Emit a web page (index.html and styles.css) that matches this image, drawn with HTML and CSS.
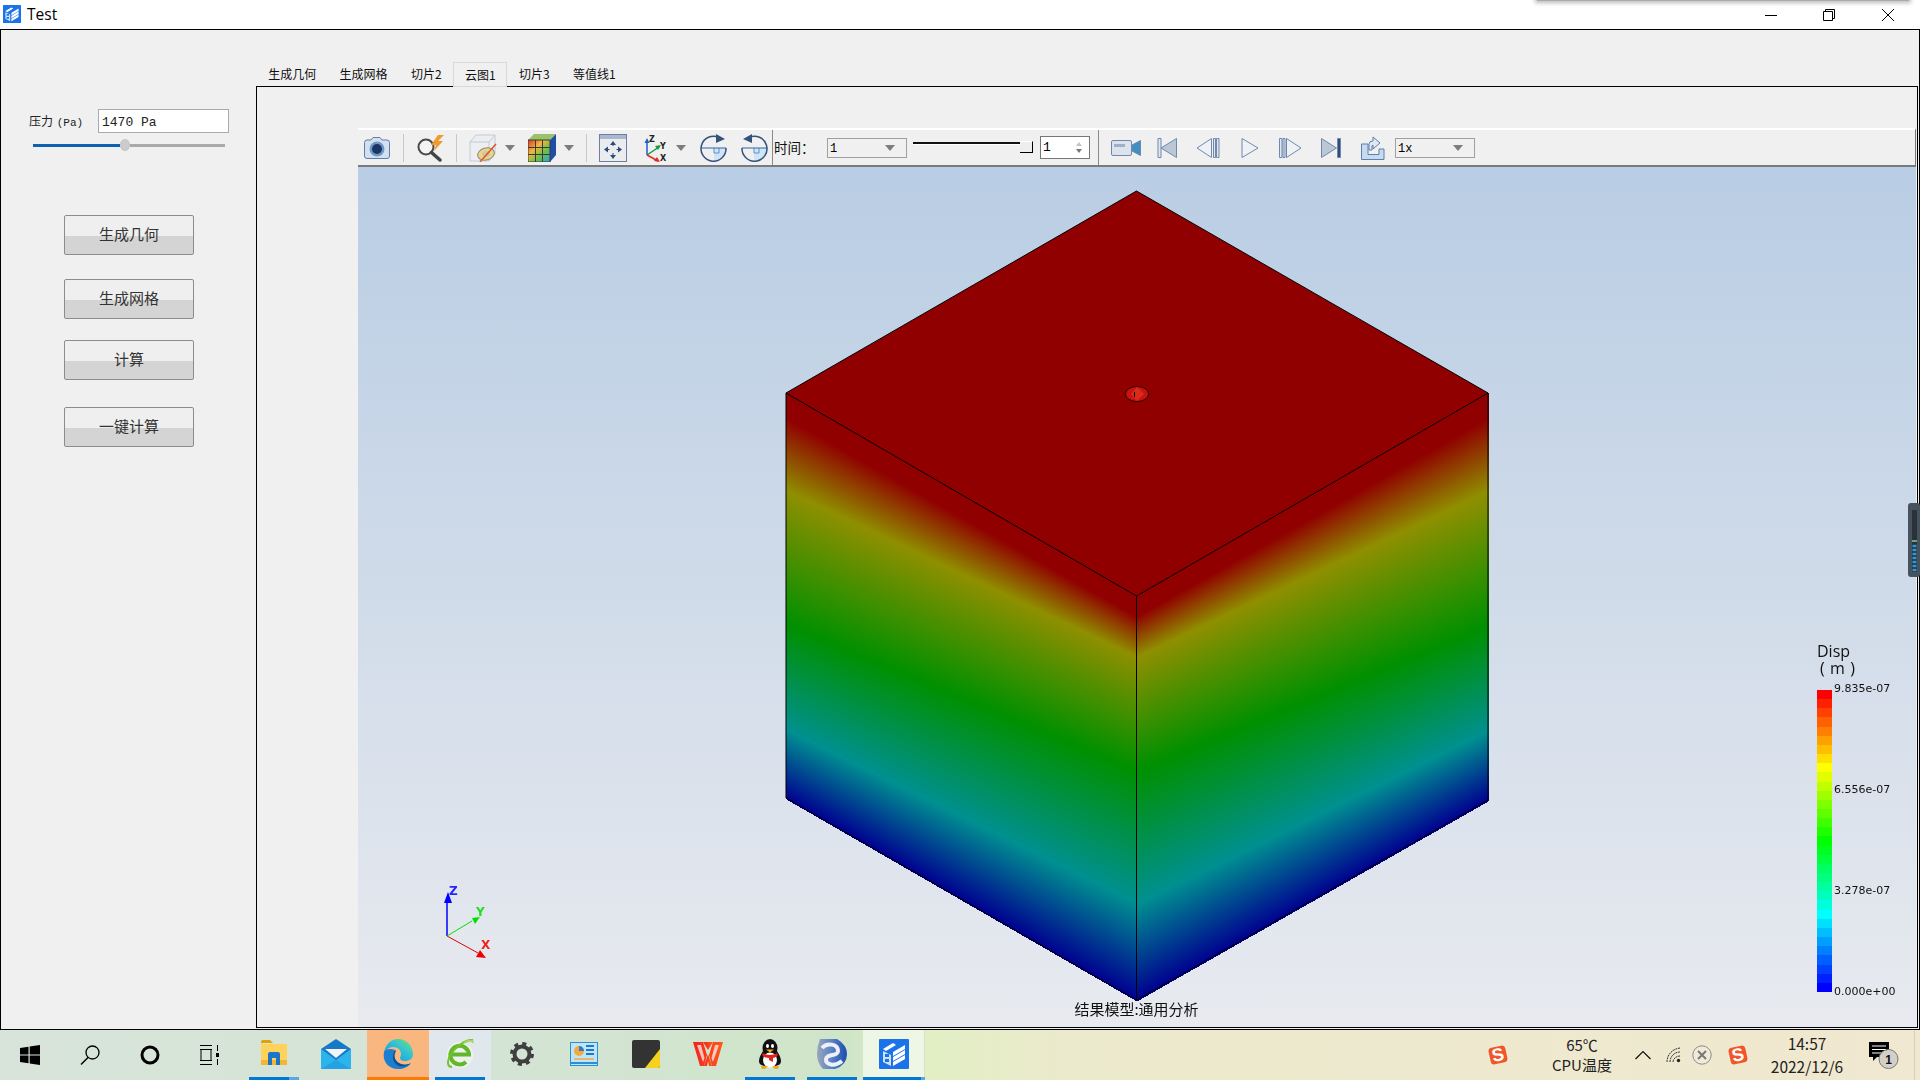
FILE: index.html
```html
<!DOCTYPE html>
<html lang="zh">
<head>
<meta charset="utf-8">
<title>Test</title>
<link rel="stylesheet" href="styles.css">
</head>
<body>
<svg class="defs" width="0" height="0">
  <defs>
    <symbol id="app" viewBox="0 0 30 30">
      <rect width="30" height="30" rx="1" fill="#1a73e8"/>
      <path d="M4 10 14 4 17 6 7 12z" fill="#fff"/>
      <path d="M4 12 12 16V27L4 23z" fill="#cfe2fb"/>
      <path d="M6 15h4v3H6zM6 20h4v3H6z" fill="#1a73e8"/>
      <path d="M14 13 26 6V10L14 17zM14 18 26 11V15L14 22zM14 23 26 16V20L14 27z" fill="#fff"/>
    </symbol>
    <symbol id="sogou" viewBox="0 0 20 20">
      <rect x="1.5" y="1.5" width="17" height="17" rx="3.5" fill="#f0562a" transform="rotate(-12 10 10)"/>
      <text class="sogou-s" x="10" y="16" text-anchor="middle" transform="rotate(-12 10 10)">S</text>
    </symbol>
  </defs>
</svg>

<header class="titlebar">
  <svg class="title-icon" width="18" height="20"><use href="#app"/></svg>
  <span class="title-text">Test</span>
  <div class="other-shadow"></div>
  <div class="win-controls">
    <svg width="14" height="14" viewBox="0 0 14 14" class="wc-min"><path d="M1 7.5h12" stroke="#000"/></svg>
    <svg width="14" height="14" viewBox="0 0 14 14" class="wc-max"><path d="M1.5 3.5h9v9h-9zM3.5 3.5v-2h9v9h-2" fill="none" stroke="#000"/></svg>
    <svg width="14" height="14" viewBox="0 0 14 14" class="wc-close"><path d="M1 1l12 12M13 1 1 13" stroke="#000"/></svg>
  </div>
</header>

<div class="window">
  <aside class="side">
    <div class="pressure">
      <label class="p-label">压力 <span class="p-unit">(Pa)</span></label>
      <div class="p-input">1470 Pa</div>
    </div>
    <div class="p-slider">
      <div class="p-fill"></div><div class="p-knob"></div><div class="p-rest"></div>
    </div>
    <button class="act act-1">生成几何</button>
    <button class="act act-2">生成网格</button>
    <button class="act act-3">计算</button>
    <button class="act act-4">一键计算</button>
  </aside>

  <main class="main">
    <nav class="tabs">
      <div class="tab">生成几何</div>
      <div class="tab">生成网格</div>
      <div class="tab">切片2</div>
      <div class="tab active">云图1</div>
      <div class="tab">切片3</div>
      <div class="tab">等值线1</div>
    </nav>
    <section class="pane">
      <div class="toolbar">
        <svg class="ml5" width="28" height="24" viewBox="0 0 28 24">
          <path d="M1.5 6.5Q1.5 4 4 4H8L10 1.5H17L19 4H24Q26.5 4 26.5 6.5V20Q26.5 22.5 24 22.5H4Q1.5 22.5 1.5 20z" fill="#d4e0ee" stroke="#5f7fa6"/>
          <circle cx="14" cy="13" r="7.5" fill="#6e98c8"/><circle cx="14" cy="13" r="5" fill="#1c3565"/>
        </svg>
        <i class="sep ml12"></i>
        <svg class="ml12" width="29" height="28" viewBox="0 0 29 28">
          <circle cx="10" cy="13" r="7.5" fill="#f4f4f4" stroke="#4a4a4a" stroke-width="2"/>
          <path d="M15.5 18.5 24 26" stroke="#444" stroke-width="3.5" stroke-linecap="round"/>
          <path d="M22 1 15 11H20L18 17 27 7H22L28 1z" fill="#ef9a2a"/>
        </svg>
        <i class="sep ml11"></i>
        <svg class="ml12" width="28" height="28" viewBox="0 0 28 28">
          <path d="M1 8 7 1H26V20L20 27H1z" fill="#eceef2" stroke="#c3c9d4"/>
          <path d="M1 8H20V27M20 8 26 1" fill="none" stroke="#c3c9d4"/>
          <ellipse cx="17" cy="20" rx="8.5" ry="6" fill="#ecd58a" stroke="#8a8a70" transform="rotate(-15 17 20)"/>
          <ellipse cx="17" cy="20" rx="4" ry="3" fill="#cfc6a4"/>
          <path d="M11 28 27 10" stroke="#d9562b" stroke-width="1.5"/>
        </svg>
        <i class="arrow ml8"></i>
        <svg class="ml13" width="28" height="28" viewBox="0 0 28 28">
          <defs><linearGradient id="cc" x1="0" y1="0" x2="1" y2="1"><stop offset="0" stop-color="#d83a2a"/><stop offset=".35" stop-color="#f4b63a"/><stop offset=".65" stop-color="#6cc04a"/><stop offset="1" stop-color="#28a0d8"/></linearGradient></defs>
          <path d="M0 6 6 0H28L22 6z" fill="#9bc16a"/><path d="M22 6 28 0V21L22 28z" fill="#1f4ea8"/>
          <rect x="0" y="6" width="22" height="22" fill="url(#cc)"/>
          <path d="M7.5 6V28M14.5 6V28M0 13.5H22M0 20.5H22M0 6H22V28H0z" stroke="#3a3a3a" fill="none"/>
        </svg>
        <i class="arrow ml8"></i>
        <i class="sep ml12"></i>
        <svg class="ml12" width="28" height="28" viewBox="0 0 28 28">
          <rect x=".5" y=".5" width="27" height="27" fill="#eaecf0" stroke="#6d7f9c"/>
          <rect x="1" y="1" width="26" height="4" fill="#a9b8cf"/>
          <path d="M14 8V23M6.5 15.5H21.5" stroke="#26476f" stroke-dasharray="4 7"/>
          <path d="M14 7 11 11H17zM14 25 11 21H17zM5 15.5 9 12.5V18.5zM23 15.5 19 12.5V18.5z" fill="#2a4c78"/>
        </svg>
        <svg class="ml17" width="25" height="28" viewBox="0 0 25 28">
          <path d="M3 21V7" stroke="#1f5fd0" stroke-width="1.5"/><path d="M3 4 0.5 9H5.5z" fill="#1f5fd0"/>
          <path d="M3 21 15 13" stroke="#179a3a" stroke-width="1.5"/><path d="M17 11 11 12 14 16z" fill="#179a3a"/>
          <path d="M3 21 14 27" stroke="#e02a2a" stroke-width="1.5"/><path d="M16 28 10 27 13 23z" fill="#e02a2a"/>
          <text class="axi" x="5" y="8">Z</text><text class="axi" x="16" y="15">Y</text><text class="axi" x="16" y="27">X</text>
        </svg>
        <i class="arrow ml7"></i>
        <svg class="ml14" width="27" height="28" viewBox="0 0 27 28">
          <path d="M14 14H26A12.5 12.5 0 0 1 14 27z" fill="#cfe5f7"/>
          <path d="M14 14V19H19V14" fill="none" stroke="#5b93c8"/>
          <path d="M1 14H26" stroke="#2a66a8"/>
          <path d="M19 3.5A12.5 12.5 0 1 0 26 14" fill="none" stroke="#34527a" stroke-width="1.5"/>
          <path d="M16 0 25 5 16 9z" fill="#34527a"/>
        </svg>
        <svg class="ml14" width="27" height="28" viewBox="0 0 27 28">
          <path d="M13 14H26A12.5 12.5 0 0 1 13 27z" fill="#cfe5f7"/>
          <path d="M13 14V19H18V14" fill="none" stroke="#5b93c8"/>
          <path d="M1 14H26" stroke="#2a66a8"/>
          <path d="M8 3.5A12.5 12.5 0 1 1 1 14" fill="none" stroke="#34527a" stroke-width="1.5"/>
          <path d="M11 0 2 5 11 9z" fill="#34527a"/>
        </svg>
        <i class="sep-dark ml4"></i>
        <span class="time-label">时间：</span>
        <div class="combo time-combo"><span class="combo-text">1</span><i class="arrow"></i></div>
        <div class="tslider"><div class="tline"></div><div class="thandle"></div></div>
        <div class="spin"><span>1</span><div class="spin-arrows"><i class="sp-up"></i><i class="sp-down"></i></div></div>
        <i class="sep-dark ml8"></i>
        <svg class="ml12" width="30" height="20" viewBox="0 0 30 20">
          <rect x=".5" y="2.5" width="20" height="15" rx="1.5" fill="#dde3ec" stroke="#6f89ad"/>
          <rect x="3" y="6" width="11" height="3" fill="#9fb0c8"/>
          <path d="M21 7 29.5 2.5V17.5L21 13z" fill="#3f8fc4" stroke="#6f89ad"/>
        </svg>
        <svg class="ml16" width="20" height="22" viewBox="0 0 20 22">
          <path d="M1 1.5H4V20.5H1z" fill="#dfe6ef" stroke="#6f89ad"/>
          <path d="M19.5 1.5V20.5L4 11z" fill="#bcc7d6" stroke="#6f89ad"/>
        </svg>
        <svg class="ml19" width="24" height="22" viewBox="0 0 24 22">
          <path d="M15.5 1.5V20.5L1 11z" fill="#eef1f5" stroke="#6f89ad"/>
          <path d="M17.5 1.5H19.5V20.5H17.5zM20.5 1.5H23V20.5H20.5z" fill="#dfe6ef" stroke="#6f89ad"/>
        </svg>
        <svg class="ml21" width="18" height="22" viewBox="0 0 18 22">
          <path d="M1 1.5V20.5L17 11z" fill="#eef1f5" stroke="#6f89ad"/>
        </svg>
        <svg class="ml20" width="23" height="22" viewBox="0 0 23 22">
          <path d="M.5 1.5H3V20.5H.5zM4 1.5H6V20.5H4z" fill="#dfe6ef" stroke="#6f89ad"/>
          <path d="M7.5 1.5V20.5L22 11z" fill="#eef1f5" stroke="#6f89ad"/>
        </svg>
        <svg class="ml19" width="20" height="22" viewBox="0 0 20 22">
          <path d="M.5 1.5V20.5L15.5 11z" fill="#bcc7d6" stroke="#6f89ad"/>
          <path d="M16.5 1.5H19.5V20.5H16.5z" fill="#2e4c78" stroke="#6f89ad"/>
        </svg>
        <svg class="ml19" width="25" height="26" viewBox="0 0 25 26">
          <path d="M1.5 9H8V19.5H19V14H24V24.5H1.5z" fill="#c8daf0" stroke="#5f7fa6"/>
          <path d="M9 15V9Q9 6 13 6V2L20 8 13 14V10Q12 10 12 12V15z" fill="#dfe9f5" stroke="#5f7fa6"/>
        </svg>
        <div class="combo speed-combo"><span class="combo-text">1x</span><i class="arrow"></i></div>
      </div>

      <div class="viewport">
        <canvas id="mesh" class="mesh" width="1557" height="859"></canvas>
        <svg class="scene" width="1557" height="859" viewBox="358 167 1557 859">
          <path d="M1136.5 191 1488 393 1136.5 596 786 393z" fill="#900000"/>
          <path class="edge" d="M1136.5 191 1488 393V800L1136.5 1000 786 798V393zM786 393 1136.5 596 1488 393M1136.5 596V1000"/>

          <ellipse cx="1137" cy="394" rx="11.5" ry="7.5" fill="#c81410" stroke="#2a0000"/>
          <path d="M1131 394 1137 387 1144 394 1137 401z" fill="#d92a1a"/>
          <path d="M1134.5 392V397" stroke="#000"/>

          <g>
            <path d="M447 936V900" stroke="#0000ff" stroke-width="1.5"/>
            <path d="M448 892 444 903H452z" fill="#0000ff"/>
            <path d="M447 936 472 921" stroke="#00e000"/>
            <path d="M480 917 472 918 475 924z" fill="#00e000"/>
            <path d="M447 936 478 953" stroke="#e00000"/>
            <path d="M486 958 476 957 480 950z" fill="#f00000"/>
            <text class="ax ax-z" x="449" y="895">Z</text>
            <text class="ax ax-y" x="476" y="916">Y</text>
            <text class="ax ax-x" x="481" y="949">X</text>
          </g>

          <text class="caption" x="1136.5" y="1015" text-anchor="middle">结果模型:通用分析</text>

          <text class="leg-title" x="1817" y="657">Disp</text>
          <text class="leg-title leg-unit" x="1820" y="674">( m )</text>
          <svg x="1817" y="690" width="15" height="302" viewBox="0 0 1 33" preserveAspectRatio="none" shape-rendering="crispEdges">
            <rect y="0" width="1" height="1.1" fill="#ff0000"/><rect y="1" width="1" height="1.1" fill="#ff2000"/><rect y="2" width="1" height="1.1" fill="#ff4000"/><rect y="3" width="1" height="1.1" fill="#ff6000"/><rect y="4" width="1" height="1.1" fill="#ff8000"/><rect y="5" width="1" height="1.1" fill="#ff9f00"/><rect y="6" width="1" height="1.1" fill="#ffbf00"/><rect y="7" width="1" height="1.1" fill="#ffdf00"/>
            <rect y="8" width="1" height="1.1" fill="#ffff00"/><rect y="9" width="1" height="1.1" fill="#dfff00"/><rect y="10" width="1" height="1.1" fill="#bfff00"/><rect y="11" width="1" height="1.1" fill="#9fff00"/><rect y="12" width="1" height="1.1" fill="#80ff00"/><rect y="13" width="1" height="1.1" fill="#60ff00"/><rect y="14" width="1" height="1.1" fill="#40ff00"/><rect y="15" width="1" height="1.1" fill="#20ff00"/>
            <rect y="16" width="1" height="1.1" fill="#00ff00"/><rect y="17" width="1" height="1.1" fill="#00ff20"/><rect y="18" width="1" height="1.1" fill="#00ff40"/><rect y="19" width="1" height="1.1" fill="#00ff60"/><rect y="20" width="1" height="1.1" fill="#00ff80"/><rect y="21" width="1" height="1.1" fill="#00ff9f"/><rect y="22" width="1" height="1.1" fill="#00ffbf"/><rect y="23" width="1" height="1.1" fill="#00ffdf"/>
            <rect y="24" width="1" height="1.1" fill="#00ffff"/><rect y="25" width="1" height="1.1" fill="#00dfff"/><rect y="26" width="1" height="1.1" fill="#00bfff"/><rect y="27" width="1" height="1.1" fill="#009fff"/><rect y="28" width="1" height="1.1" fill="#0080ff"/><rect y="29" width="1" height="1.1" fill="#0060ff"/><rect y="30" width="1" height="1.1" fill="#0040ff"/><rect y="31" width="1" height="1.1" fill="#0020ff"/><rect y="32" width="1" height="1" fill="#0000ff"/>
          </svg>
          <text class="leg-val" x="1834" y="692">9.835e-07</text>
          <text class="leg-val" x="1834" y="793">6.556e-07</text>
          <text class="leg-val" x="1834" y="894">3.278e-07</text>
          <text class="leg-val" x="1834" y="995">0.000e+00</text>

          <rect x="1908" y="503" width="12" height="74" rx="3" fill="#46525e"/>
          <rect x="1912" y="510" width="5" height="62" fill="#2a3138"/>
          <path d="M1912 541H1917" stroke="#5fae7a" stroke-width="2"/>
          <path d="M1912.5 546H1916.5M1912.5 550H1916.5M1912.5 554H1916.5M1912.5 558H1916.5M1912.5 562H1916.5M1912.5 566H1916.5M1912.5 570H1916.5" stroke="#2a9ad8" stroke-width="2.5"/>
        </svg>
      </div>
    </section>
  </main>
</div>

<footer class="taskbar">
  <div class="sys-btn">
    <svg width="20" height="20" viewBox="0 0 20 20"><path d="M0 3 8.5 1.7V9.4H0zM9.7 1.5 20 0V9.4H9.7zM0 10.6H8.5V18.3L0 17zM9.7 10.6H20V20L9.7 18.5z" fill="#000"/></svg>
  </div>
  <div class="sys-btn">
    <svg width="20" height="20" viewBox="0 0 20 20"><circle cx="12.5" cy="7.5" r="6.5" fill="none" stroke="#000" stroke-width="1.3"/><path d="M8 12.5 1 19.5" stroke="#000" stroke-width="1.4"/></svg>
  </div>
  <div class="sys-btn">
    <svg width="20" height="20" viewBox="0 0 20 20"><circle cx="10" cy="10" r="8" fill="none" stroke="#000" stroke-width="3"/></svg>
  </div>
  <div class="sys-btn">
    <svg width="20" height="20" viewBox="0 0 20 20"><path d="M0 .5H12M0 19.5H12M1 4.5H11V15.5H1zM0 4.5H12M0 15.5H12M17.5 0V6M17.5 14V20" fill="none" stroke="#000"/><rect x="16" y="8" width="3" height="4"/></svg>
  </div>

  <div class="app-btn">
    <svg class="tico" width="28" height="30" viewBox="0 0 28 30">
      <path d="M1 3Q1 1 3 1H10L13 4H1z" fill="#e0a200"/>
      <path d="M1 5H27V26H1z" fill="#fdd35c"/>
      <path d="M1 21H27V26H1z" fill="#f2b632"/>
      <path d="M8 26V15Q8 13 10 13H18Q20 13 20 15V26H16V19H12V26z" fill="#1d75c9"/>
    </svg>
    <i class="ind ind-split"></i>
  </div>
  <div class="app-btn">
    <svg class="tico" width="30" height="30" viewBox="0 0 30 30">
      <path d="M0 10 15 0 30 10V30H0z" fill="#1679c9"/>
      <path d="M15 21 30 10V30H0V10z" fill="#2cb4ec"/>
      <path d="M4 10H26L15 19z" fill="#f4f4f4"/>
      <path d="M15 21 30 30H0z" fill="#1e95dc" opacity=".6"/>
    </svg>
    <i class="ind ind-none"></i>
  </div>
  <div class="app-btn app-edge">
    <svg class="tico" width="30" height="30" viewBox="0 0 30 30">
      <defs><linearGradient id="eg" x1="0" y1="1" x2="1" y2="0"><stop offset="0" stop-color="#1e88d6"/><stop offset=".55" stop-color="#2cc0d8"/><stop offset="1" stop-color="#7ee07a"/></linearGradient></defs>
      <path d="M15 0C24 0 30 7 30 15c0 5-4 7-8 7-3 0-5-1-5-3 0-1 1-2 1-4 0-4-3-7-8-7C6 8 3 11 1 14 2 6 8 0 15 0z" fill="url(#eg)"/>
      <path d="M1 13C-1 23 6 30 15 30c6 0 10-2 13-6-3 2-7 2-10 1C11 23 9 17 12 11 7 9 3 10 1 13z" fill="#1a7fd0"/>
      <path d="M12 11C8 18 10 24 16 27c5 1 9 0 12-3-3 2-7 2-10 1C12 23 10 17 13 12z" fill="#0c4f94"/>
    </svg>
    <i class="ind ind-orange"></i>
  </div>
  <div class="app-btn app-ie">
    <svg class="tico" width="28" height="30" viewBox="0 0 28 30">
      <circle cx="14" cy="16" r="13" fill="#eef2ee"/>
      <path d="M6 15.5H23A9.3 9.3 0 1 0 20 23" fill="none" stroke="#62b82a" stroke-width="4"/>
      <path d="M27 1C20 0 8 8 3 19 1 24 2 28 6 28" fill="none" stroke="#74c22e" stroke-width="2"/>
      <path d="M18 4C23 1 27 1 27 4" fill="none" stroke="#a6d86a" stroke-width="2"/>
    </svg>
    <i class="ind"></i>
  </div>
  <div class="app-btn">
    <svg class="tico" width="24" height="24" viewBox="0 0 24 24">
      <circle cx="12" cy="12" r="7.5" fill="none" stroke="#3f3f3f" stroke-width="4"/>
      <circle cx="12" cy="12" r="10.2" fill="none" stroke="#3f3f3f" stroke-width="3.6" stroke-dasharray="4 4"/>
    </svg>
    <i class="ind ind-none"></i>
  </div>
  <div class="app-btn">
    <svg class="tico" width="28" height="24" viewBox="0 0 28 24">
      <rect x=".5" y=".5" width="27" height="23" fill="#bfe4fb" stroke="#2b8fd6"/>
      <circle cx="9" cy="9" r="5" fill="#f4a93a"/><path d="M9 9V4A5 5 0 0 1 14 9z" fill="#2f7dc8"/>
      <path d="M16 4H24M16 8H24M16 12H24" stroke="#1c7cc8" stroke-width="2"/>
      <path d="M4 17H24" stroke="#f4a93a" stroke-width="1.5"/><path d="M0 21H28" stroke="#2b8fd6" stroke-width="2"/>
    </svg>
    <i class="ind ind-none"></i>
  </div>
  <div class="app-btn">
    <svg class="tico" width="28" height="28" viewBox="0 0 28 28">
      <rect width="28" height="28" rx="2" fill="#333"/>
      <path d="M28 9V26Q28 28 26 28H13z" fill="#f6d21e"/>
    </svg>
    <i class="ind ind-none"></i>
  </div>
  <div class="app-btn">
    <svg class="tico" width="30" height="26" viewBox="0 0 30 26">
      <defs><linearGradient id="wg" x1="0" y1="0" x2="1" y2="0"><stop offset="0" stop-color="#f0241f"/><stop offset="1" stop-color="#ff5a1a"/></linearGradient></defs>
      <path d="M0 1H10L14 14 11 25H7zM30 1H20L16 14 19 25H23z" fill="url(#wg)"/>
      <path d="M10 1H20L15 9zM11 25 15 13 19 25H16L15 20 14 25z" fill="url(#wg)"/>
      <path d="M4 4H8L11.5 17 10 21zM26 4H22L18.5 17 20 21z" fill="#fff" opacity=".7"/>
    </svg>
    <i class="ind ind-none"></i>
  </div>
  <div class="app-btn">
    <svg class="tico" width="24" height="30" viewBox="0 0 24 30">
      <ellipse cx="12" cy="9" rx="7.5" ry="9" fill="#111"/>
      <path d="M5 12C1 18 0 23 2 25 4 28 20 28 22 25 24 23 23 18 19 12z" fill="#111"/>
      <ellipse cx="12" cy="21" rx="7" ry="7.5" fill="#fff"/>
      <ellipse cx="9.5" cy="7" rx="1.5" ry="2" fill="#fff"/><ellipse cx="14.5" cy="7" rx="1.5" ry="2" fill="#fff"/>
      <path d="M8 10.5H16L12 13.5z" fill="#f0a81c"/>
      <path d="M4.5 14Q12 18 19.5 14V17Q16 19 15 19V23L11 21V19Q7 19 4.5 17z" fill="#e0231c"/>
      <path d="M3 27H10L7 30H4zM14 27H21L20 30H17z" fill="#f0a81c"/>
    </svg>
    <i class="ind"></i>
  </div>
  <div class="app-btn">
    <svg class="tico" width="30" height="30" viewBox="0 0 30 30">
      <defs>
        <linearGradient id="sw" x1="0" y1="0" x2="1" y2="0"><stop offset="0" stop-color="#9aa6b8"/><stop offset=".45" stop-color="#5f86c8"/><stop offset="1" stop-color="#1a4cb0"/></linearGradient>
      </defs>
      <path d="M3 0H20Q30 6 30 15 30 26 18 30H6Q0 24 0 15 0 8 3 0z" fill="url(#sw)"/>
      <path d="M5 9C10 3 21 5 21 12 21 18 10 14 9 20 8 26 18 28 25 22" fill="none" stroke="#eef0f4" stroke-width="4"/>
    </svg>
    <i class="ind"></i>
  </div>
  <div class="app-btn app-cur">
    <svg class="tico" width="30" height="30"><use href="#app"/></svg>
    <i class="ind ind-full"></i>
  </div>

  <div class="tray">
    <svg width="20" height="20"><use href="#sogou"/></svg>
    <div class="cpu ml39"><span>65℃</span><span>CPU温度</span></div>
    <svg class="ml18" width="16" height="10" viewBox="0 0 16 10"><path d="M.5 9 8 1.5 15.5 9" fill="none" stroke="#111" stroke-width="1.2"/></svg>
    <svg class="ml15" width="15" height="16" viewBox="0 0 15 16">
      <path d="M1 15C1 8 6 2 14 1M4 15C4 10 8 5 14 5M7 15C7 12 10 9 14 9" fill="none" stroke="#333" stroke-dasharray="2 .7"/>
      <circle cx="12.5" cy="13.5" r="1.7" fill="#222"/>
    </svg>
    <svg class="ml11" width="20" height="20" viewBox="0 0 20 20">
      <circle cx="10" cy="10" r="9.2" fill="#f0ead8" stroke="#8a8a8a"/>
      <path d="M6 6 14 14M14 6 6 14" stroke="#777" stroke-width="2"/>
    </svg>
    <svg class="ml16" width="20" height="20"><use href="#sogou"/></svg>
    <div class="clock ml22"><span>14:57</span><span>2022/12/6</span></div>
    <div class="notif ml25">
      <svg width="30" height="28" viewBox="0 0 30 28">
        <path d="M0 1H20V16H8L4 20V16H0z" fill="#000"/>
        <path d="M3 5H17M3 8.5H17M3 12H14" stroke="#fff"/>
        <circle cx="19.5" cy="18" r="9.5" fill="#d2d0c8" stroke="#777"/>
        <text class="badge" x="19.5" y="22.5" text-anchor="middle">1</text>
      </svg>
    </div>
    <div class="desk ml15"></div>
  </div>
</footer>
<script src="script.js"></script>
</body>
</html>
```

FILE: styles.css
```css
* { box-sizing: border-box; }
html, body { margin: 0; padding: 0; }
body {
  width: 1920px;
  height: 1080px;
  overflow: hidden;
  display: flex;
  flex-direction: column;
  background: #f0f0f0;
  font-family: "Noto Sans CJK SC", "Noto Sans", sans-serif;
  color: #000;
}
.defs { position: absolute; }
svg { display: block; flex: none; }
i { display: block; flex: none; }

/* title bar */
.titlebar {
  position: relative;
  height: 29px;
  flex: none;
  background: #fff;
  display: flex;
  align-items: center;
  padding-left: 3px;
}
.title-icon { margin-top: -1px; }
.title-text {
  margin-left: 6px;
  font: 15.5px "Open Sans", "Noto Sans", sans-serif;
  margin-top: -1px;
}
.other-shadow {
  position: absolute;
  left: 1537px;
  top: -3px;
  width: 372px;
  height: 4px;
  background: #aaa;
  box-shadow: 0 0 4px 2px #bbb;
}
.win-controls { margin-left: auto; display: flex; margin-right: 25px; }
.wc-min { margin-right: 44px; }
.wc-max { margin-right: 45px; }

/* main window */
.window {
  flex: none;
  height: 1001px;
  border: 1px solid #000;
  display: flex;
  background: #f0f0f0;
}
.side {
  width: 255px;
  flex: none;
  display: flex;
  flex-direction: column;
  padding-top: 79px;
}
.pressure { display: flex; align-items: center; padding-left: 28px; height: 24px; }
.p-label { width: 69px; font-size: 12px; color: #222; margin-top: -1px; white-space: nowrap; }
.p-unit { font: 11px "Liberation Mono", monospace; margin-left: 1px; }
.p-input {
  width: 131px;
  height: 24px;
  border: 1px solid #aaa;
  background: #fff;
  padding: 2px 0 0 3px;
  font: 13px/22px "Liberation Mono", monospace;
  color: #222;
}
.p-slider { display: flex; align-items: center; margin: 7px 0 0 32px; height: 10px; }
.p-fill { width: 87px; height: 3px; background: #0f62b0; }
.p-knob { width: 10px; height: 12px; border-radius: 50%; background: #ccc; border: 1px solid #c4c4c4; }
.p-rest { width: 95px; height: 3px; background: #aaa; }
.act {
  align-self: flex-start;
  margin-left: 63px;
  width: 130px;
  height: 40px;
  border: 1px solid #8c8c8c;
  border-radius: 2px;
  padding: 0 0 3px;
  background: linear-gradient(#efefef 0, #efefef 52%, #d4d4d4 52%, #d4d4d4 100%);
  font: 15px "Noto Sans CJK SC", sans-serif;
  color: #333;
}
.act-1 { margin-top: 65px; }
.act-2 { margin-top: 24px; }
.act-3 { margin-top: 21px; }
.act-4 { margin-top: 27px; }

.main { flex: 1; min-width: 0; display: flex; flex-direction: column; padding: 32px 1px 1px 0; }
.tabs { height: 24px; flex: none; display: flex; padding-left: .5px; font-size: 12px; color: #111; }
.tab { padding: 0 11.7px; line-height: 24px; white-space: nowrap; }
.tab.active {
  position: relative;
  height: 25px;
  padding: 0 10.7px;
  border: 1px solid #d8d8d8;
  background: #f0f0f0;
  line-height: 23px;
  z-index: 1;
}
.pane {
  flex: 1;
  min-height: 0;
  border: 1px solid #000;
  padding: 41px 1px 0 101px;
  display: flex;
  flex-direction: column;
}
.toolbar {
  flex: none;
  height: 39px;
  border-top: 2px solid #fff;
  border-bottom: 2px solid #7a7a7a;
  border-right: 1px solid #777;
  display: flex;
  align-items: center;
  background: #f0f0f0;
}
.sep { width: 1px; height: 28px; background: #c9c9c9; }
.sep-dark { width: 1px; height: 35px; background: #8a8a8a; }
.arrow { width: 0; height: 0; border-left: 5px solid transparent; border-right: 5px solid transparent; border-top: 6px solid #7d7d7d; }
.axi { font: bold 8px "DejaVu Sans", sans-serif; fill: #222; }
.ml4 { margin-left: 4px; }
.ml5 { margin-left: 5px; }
.ml7 { margin-left: 7px; }
.ml8 { margin-left: 8px; }
.ml11 { margin-left: 11px; }
.ml12 { margin-left: 12px; }
.ml13 { margin-left: 13px; }
.ml14 { margin-left: 14px; }
.ml15 { margin-left: 15px; }
.ml16 { margin-left: 16px; }
.ml17 { margin-left: 17px; }
.ml18 { margin-left: 18px; }
.ml19 { margin-left: 19px; }
.ml20 { margin-left: 20px; }
.ml21 { margin-left: 21px; }
.ml22 { margin-left: 22px; }
.ml25 { margin-left: 25px; }
.ml39 { margin-left: 39px; }
.time-label { margin: -2px 0 0 1px; width: 53px; font-size: 13.5px; color: #111; white-space: nowrap; }
.combo {
  height: 20px;
  border: 1px solid #a0a0a0;
  display: flex;
  align-items: center;
  justify-content: space-between;
  padding: 0 11px 0 2px;
  font: 12px "Liberation Mono", monospace;
}
.combo-text { margin-top: 2px; }
.time-combo { width: 80px; }
.speed-combo { width: 80px; margin-left: 10px; }
.tslider { display: flex; align-items: flex-start; width: 120px; margin-left: 6px; height: 13px; }
.tline { width: 107px; height: 3px; border-top: 2px solid #111; border-bottom: 1px solid #fff; margin-top: 1px; }
.thandle { width: 13px; height: 12px; border-right: 1px solid #000; border-bottom: 1px solid #000; border-top: 1px solid #fff; background: #eee; }
.spin {
  margin-left: 7px;
  width: 50px;
  height: 23px;
  border: 1px solid #777;
  background: #fff;
  display: flex;
  align-items: center;
  justify-content: space-between;
  padding: 0 7px 0 2px;
  font: 13px "Liberation Mono", monospace;
}
.spin-arrows { display: flex; flex-direction: column; gap: 3px; }
.sp-up { width: 0; height: 0; border-left: 3px solid transparent; border-right: 3px solid transparent; border-bottom: 4px solid #c4c4c4; }
.sp-down { width: 0; height: 0; border-left: 3px solid transparent; border-right: 3px solid transparent; border-top: 4px solid #777; }

.viewport {
  flex: 1;
  min-height: 0;
  position: relative;
  background: linear-gradient(#b9cde4, #e8eaef);
}
.mesh { position: absolute; left: 0; top: 0; }
.scene { position: absolute; left: 0; top: 0; overflow: visible; }
.edge { fill: none; stroke: #000; stroke-width: 1; }
.ax { font: bold 13px "DejaVu Sans", sans-serif; }
.ax-z { fill: #2424ff; font-size: 12px; }
.ax-y { fill: #1fe01f; font-size: 12px; }
.ax-x { fill: #f42020; font-size: 12px; }
.caption { font-size: 15px; fill: #111; }
.leg-title { font: 16px "Open Sans", "Noto Sans", sans-serif; fill: #111; }
.leg-unit { letter-spacing: .6px; }
.leg-val { font: 11px "DejaVu Sans", sans-serif; fill: #111; }

/* task bar */
.taskbar {
  flex: none;
  height: 50px;
  display: flex;
  background: linear-gradient(90deg, #d8e4da 0, #d3e4d3 30%, #cfe5c8 44%, #e2efc4 48%, #eceacd 56%, #f0e8d0 100%);
}
.sys-btn { width: 60px; display: flex; align-items: center; justify-content: center; padding-bottom: 1px; }
.sys-btn:nth-child(4) { margin-right: 3px; }
.app-btn { width: 62px; display: flex; flex-direction: column; align-items: center; height: 50px; }
.tico { margin: auto 0; }
.ind { width: 50px; height: 3px; background: #0078d4; flex: none; }
.ind-none { background: transparent; }
.ind-split { background: linear-gradient(90deg, #0078d4 0, #0078d4 80%, #5aa8e6 80%); }
.ind-orange { width: 62px; background: #ff7a00; }
.ind-full { width: 62px; background: linear-gradient(90deg, #0078d4 0, #0078d4 93%, #5aa8e6 93%); }
.app-edge { background: #f9b67f; }
.app-ie { background: #e0e8ee; }
.app-cur { background: #eef6e6; border-right: 1px solid #d6e0cc; }
.tray { margin-left: auto; display: flex; align-items: center; height: 50px; }
.cpu, .clock { display: flex; flex-direction: column; align-items: center; line-height: 23px; color: #222; white-space: nowrap; }
.cpu { width: 70px; font-size: 15px; line-height: 20px; }
.clock { width: 74px; font-size: 15.5px; }
.sogou-s { font: bold 18px "Liberation Sans", sans-serif; fill: #fff; }
.notif { width: 30px; }
.badge { font: bold 12px "Liberation Sans", sans-serif; fill: #111; }
.desk { width: 6px; height: 50px; border-left: 1px solid #d8d0b8; }
```

FILE: script.js
```js
// Contour plot of the displacement result on the two visible side faces.
(function () {
  var canvas = document.getElementById("mesh");
  var ctx = canvas.getContext("2d");
  var img = ctx.createImageData(canvas.width, canvas.height);
  var ox = 358, oy = 167;
  var colors = [[144,0,0],[144,0,0],[143,143,0],[0,144,0],[0,144,144],[0,0,144]];
  var atEdge = [0, .06, .24, .57, .83, 1];
  var atCentre = [0, .05, .15, .43, .76, 1];

  function colorAt(v, u) {
    var prevV = 0;
    for (var i = 1; i < colors.length; i++) {
      var s = atEdge[i] + (atCentre[i] - atEdge[i]) * u;
      if (v <= s || i === colors.length - 1) {
        var t = Math.min(1, Math.max(0, (v - prevV) / (s - prevV)));
        return [0, 1, 2].map(function (k) {
          return colors[i - 1][k] + (colors[i][k] - colors[i - 1][k]) * t;
        });
      }
      prevV = s;
    }
    return colors[colors.length - 1];
  }

  function face(x0, x1, top0, top1, h0, h1, uOf) {
    for (var x = Math.ceil(x0); x <= Math.floor(x1); x++) {
      var f = (x - x0) / (x1 - x0);
      var top = top0 + (top1 - top0) * f;
      var h = h0 + (h1 - h0) * f;
      for (var y = Math.floor(top); y <= Math.ceil(top + h); y++) {
        var v = Math.min(1, Math.max(0, (y - top) / h));
        var c = colorAt(v, uOf(f));
        var p = ((y - oy) * canvas.width + (x - ox)) * 4;
        img.data[p] = c[0]; img.data[p + 1] = c[1]; img.data[p + 2] = c[2]; img.data[p + 3] = 255;
      }
    }
  }

  face(786, 1136.5, 393, 596, 405, 404, function (f) { return f; });
  face(1136.5, 1488, 596, 393, 404, 407, function (f) { return 1 - f; });
  ctx.putImageData(img, 0, 0);
})();
```
